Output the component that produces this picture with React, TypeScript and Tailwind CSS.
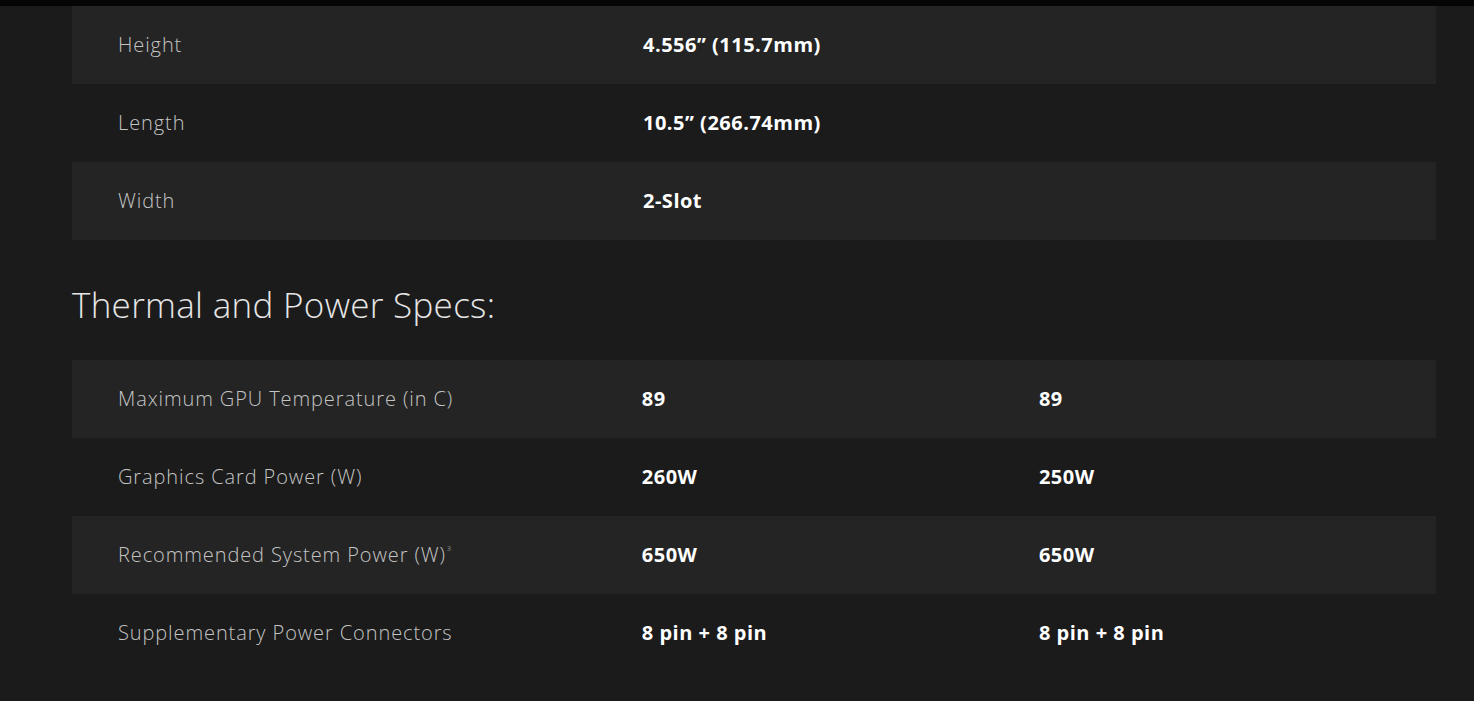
import React from "react";

type Row = { label: React.ReactNode; values: string[] };

const dims: Row[] = [
  { label: "Height", values: ["4.556” (115.7mm)"] },
  { label: "Length", values: ["10.5” (266.74mm)"] },
  { label: "Width", values: ["2-Slot"] },
];

const thermal: Row[] = [
  { label: "Maximum GPU Temperature (in C)", values: ["89", "89"] },
  { label: "Graphics Card Power (W)", values: ["260W", "250W"] },
  {
    label: (
      <>
        Recommended System Power (W)
        <sup className="text-[7px] align-super ml-[1px]">3</sup>
      </>
    ),
    values: ["650W", "650W"],
  },
  { label: "Supplementary Power Connectors", values: ["8 pin + 8 pin", "8 pin + 8 pin"] },
];

function Table({ rows }: { rows: Row[] }) {
  return (
    <div className="flex flex-col">
      {rows.map((r, i) => (
        <div
          key={i}
          className={`flex items-center h-[78px] ${i % 2 === 0 ? "bg-[#242424]" : "bg-[#1b1b1b]"}`}
        >
          <div className="w-[571px] pl-[46px] text-[20px] font-light text-[#c4c4c4] tracking-[0.9px] leading-none">
            {r.label}
          </div>
          {r.values.map((v, j) => (
            <div key={j} className="w-[398px] text-[20px] font-bold text-white tracking-[0.5px] leading-none">
              {v}
            </div>
          ))}
        </div>
      ))}
    </div>
  );
}

export default function App() {
  return (
    <div
      className="w-[1474px] h-[701px] bg-[#1b1b1b] overflow-hidden"
      style={{ fontFamily: "'Open Sans', Roboto, sans-serif" }}
    >
      <div className="h-[6px] bg-[#050505]" />
      <div className="px-[72px] pr-[38px]">
        <Table rows={dims} />
        <h2 className="mt-[46px] mb-[36px] text-[35px] font-light text-[#e6e6e6] tracking-[0.3px] leading-[38px]">
          Thermal and Power Specs:
        </h2>
        <Table rows={thermal} />
      </div>
    </div>
  );
}
